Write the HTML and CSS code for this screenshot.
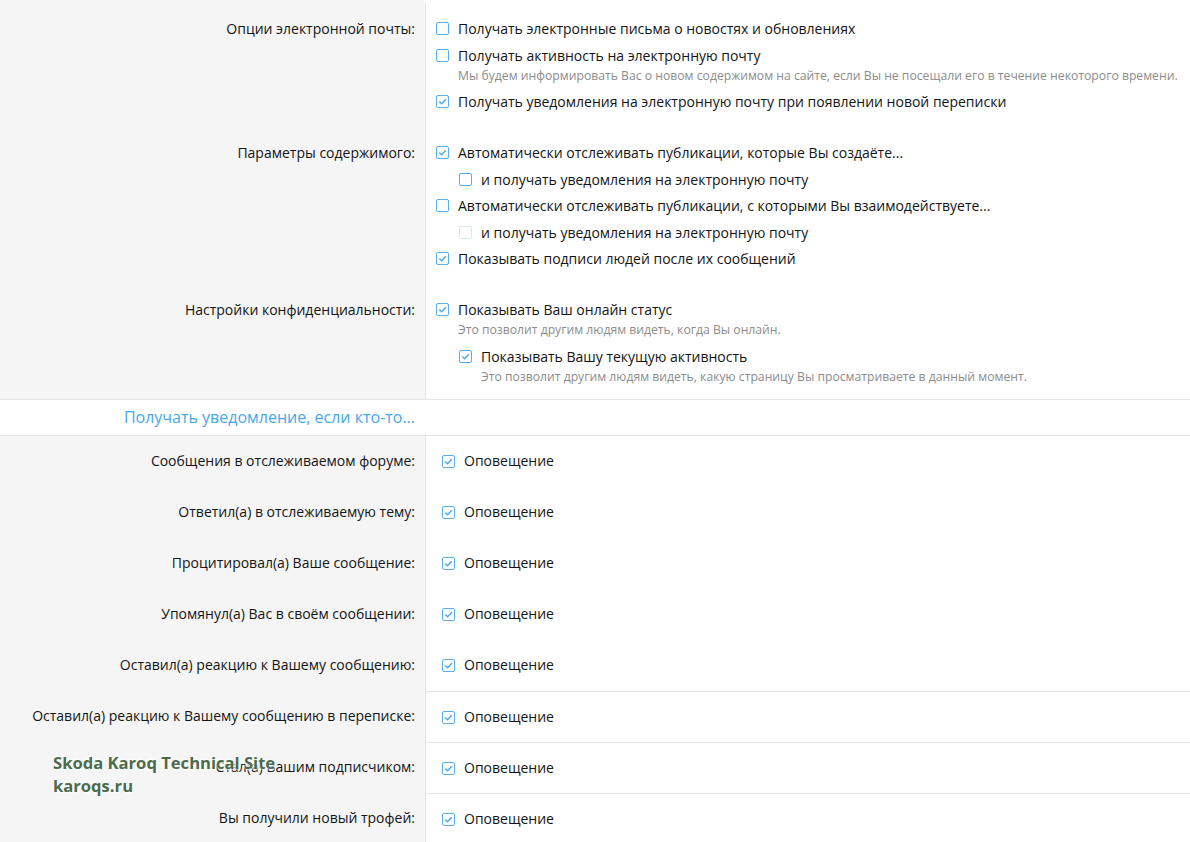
FILE: index.html
```html
<!DOCTYPE html>
<html lang="ru">
<head>
    <meta charset="UTF-8">
    <meta name="viewport" content="width=device-width, initial-scale=1.0">
    <title>Настройки</title>
    <link rel="stylesheet" href="styles.css">
</head>
<body>

    <div class="block">
        <dl class="formRow">
            <dt>Опции электронной почты:</dt>
            <dd>
                <ul class="checks">
                    <li><span class="box"></span>Получать электронные письма о новостях и обновлениях</li>
                    <li><span class="box"></span>Получать активность на электронную почту
                        <div class="hint">Мы будем информировать Вас о новом содержимом на сайте, если Вы не посещали его в течение некоторого времени.</div>
                    </li>
                    <li><span class="box checked"></span>Получать уведомления на электронную почту при появлении новой переписки</li>
                </ul>
            </dd>
        </dl>

        <dl class="formRow">
            <dt>Параметры содержимого:</dt>
            <dd>
                <ul class="checks">
                    <li><span class="box checked"></span>Автоматически отслеживать публикации, которые Вы создаёте...</li>
                    <li class="sub"><span class="box"></span>и получать уведомления на электронную почту</li>
                    <li><span class="box"></span>Автоматически отслеживать публикации, с которыми Вы взаимодействуете...</li>
                    <li class="sub"><span class="box disabled"></span>и получать уведомления на электронную почту</li>
                    <li><span class="box checked"></span>Показывать подписи людей после их сообщений</li>
                </ul>
            </dd>
        </dl>

        <dl class="formRow formRow--last">
            <dt>Настройки конфиденциальности:</dt>
            <dd>
                <ul class="checks">
                    <li><span class="box checked"></span>Показывать Ваш онлайн статус
                        <div class="hint">Это позволит другим людям видеть, когда Вы онлайн.</div>
                    </li>
                    <li class="sub"><span class="box checked"></span>Показывать Вашу текущую активность
                        <div class="hint">Это позволит другим людям видеть, какую страницу Вы просматриваете в данный момент.</div>
                    </li>
                </ul>
            </dd>
        </dl>

        <h3 class="sectionHeader"><span>Получать уведомление, если кто-то...</span></h3>

        <dl class="formRow formRow--alert">
            <dt>Сообщения в отслеживаемом форуме:</dt>
            <dd><span class="box checked"></span>Оповещение</dd>
        </dl>
        <dl class="formRow formRow--alert">
            <dt>Ответил(а) в отслеживаемую тему:</dt>
            <dd><span class="box checked"></span>Оповещение</dd>
        </dl>
        <dl class="formRow formRow--alert">
            <dt>Процитировал(а) Ваше сообщение:</dt>
            <dd><span class="box checked"></span>Оповещение</dd>
        </dl>
        <dl class="formRow formRow--alert">
            <dt>Упомянул(а) Вас в своём сообщении:</dt>
            <dd><span class="box checked"></span>Оповещение</dd>
        </dl>
        <dl class="formRow formRow--alert">
            <dt>Оставил(а) реакцию к Вашему сообщению:</dt>
            <dd><span class="box checked"></span>Оповещение</dd>
        </dl>
        <dl class="formRow formRow--alert formRow--separated">
            <dt>Оставил(а) реакцию к Вашему сообщению в переписке:</dt>
            <dd><span class="box checked"></span>Оповещение</dd>
        </dl>
        <dl class="formRow formRow--alert formRow--separated">
            <dt>Стал(а) Вашим подписчиком:</dt>
            <dd><span class="box checked"></span>Оповещение</dd>
        </dl>
        <dl class="formRow formRow--alert formRow--separated">
            <dt>Вы получили новый трофей:</dt>
            <dd><span class="box checked"></span>Оповещение</dd>
        </dl>

        <div class="watermark">Skoda Karoq Technical Site<br>karoqs.ru</div>
    </div>

</body>
</html>
```

FILE: styles.css
```css
body {
    margin: 0;
    font-family: 'Open Sans', 'Noto Sans', sans-serif;
    font-size: 14px;
    color: #141414;
    background: #fff;
    overflow: hidden;
}

.block {
    position: relative;
    padding-top: 3px;
    background: linear-gradient(to right, #f5f5f5 425px, #fff 425px);
}

.formRow {
    display: flex;
    margin: 0;
}

.formRow dt {
    width: 426px;
    box-sizing: border-box;
    flex-shrink: 0;
    padding: 16px 10px 15px 0;
    text-align: right;
    line-height: 20px;
    background: #f5f5f5;
    border-right: 1px solid #e5e5e5;
}

.formRow dd {
    flex: 1;
    margin: 0;
    padding: 16px 10px 15px 10px;
    line-height: 20px;
    background: #fff;
}

.formRow--last dt,
.formRow--last dd {
    padding-bottom: 12px;
}

.checks {
    list-style: none;
    margin: 0;
    padding: 0;
}

.checks li {
    position: relative;
    padding-left: 22px;
    margin-bottom: 6.5px;
}

.checks li:last-child {
    margin-bottom: 0;
}

.checks li.sub {
    margin-left: 23px;
}

.checks .box {
    position: absolute;
    left: 0;
    top: 3px;
}

.hint {
    font-size: 12.2px;
    color: #8c8c8c;
    line-height: 20px;
}

.box {
    display: inline-block;
    width: 13px;
    height: 13px;
    box-sizing: border-box;
    border: 1px solid #5aaeee;
    border-radius: 2px;
    background: #fff;
    vertical-align: -2px;
}

.box.checked {
    background: #fff no-repeat center / 9px 9px;
    background-image: url("data:image/svg+xml;utf8,<svg xmlns='http://www.w3.org/2000/svg' viewBox='0 0 9 9'><path d='M1.3 4.6 L3.6 6.8 L7.8 2.2' fill='none' stroke='%2347a7eb' stroke-width='1.4'/></svg>");
}

.box.disabled {
    border-color: #d3e9fa;
}

.sectionHeader {
    margin: 0;
    background: #fff;
    border-top: 1px solid #e5e5e5;
    border-bottom: 1px solid #e5e5e5;
    font-size: 16px;
    font-weight: normal;
    color: #47a7eb;
    line-height: 35px;
}

.sectionHeader span {
    display: block;
    width: 415px;
    text-align: right;
}

.formRow--alert dt {
    padding: 15.5px 10px 15.5px 0;
}

.formRow--alert dd {
    padding: 15.5px 10px 15.5px 16px;
}

.formRow--alert dd .box {
    margin-right: 9px;
}

.formRow--separated dt {
    padding: 15px 10px 15px 0;
}

.formRow--separated dd {
    padding: 15px 10px 15px 16px;
    border-top: 1px solid #e5e5e5;
}

.watermark {
    position: absolute;
    left: 53px;
    top: 751px;
    font-size: 16.6px;
    font-weight: bold;
    line-height: 23px;
    color: #4c6a4c;
    text-shadow: 1px 1px 2px #fff, -1px -1px 2px #fff;
}
```
